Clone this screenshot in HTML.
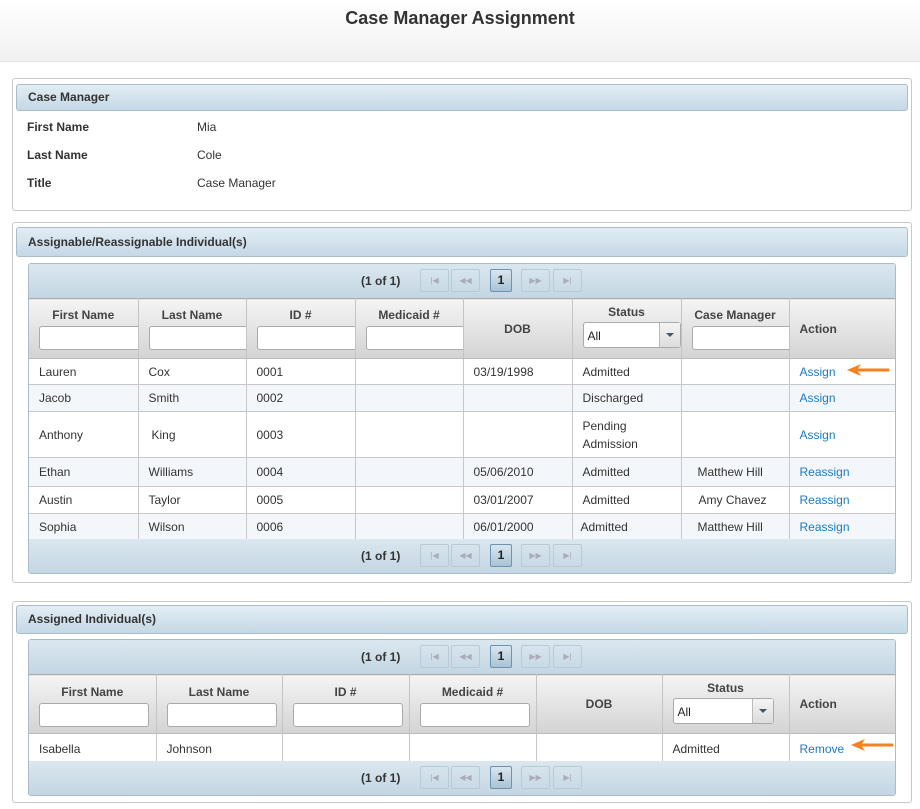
<!DOCTYPE html>
<html><head><style>
*{box-sizing:border-box;margin:0;padding:0}
body{width:920px;height:809px;background:#fff;font-family:"Liberation Sans",Arial,sans-serif;font-size:12px;color:#333;position:relative;overflow:hidden}
.top{position:absolute;left:0;top:0;width:920px;height:62px;background:linear-gradient(#fff,#f1f1f1);border-bottom:1px solid #e4e4e4}
.top h1{font-size:18px;text-align:center;padding-top:8px;color:#333}
.panel{position:absolute;left:12px;width:900px;border:1px solid #c8c8c8;border-radius:3px;background:#fff}
.ph{position:absolute;left:3px;right:3px;border:1px solid #a8bccb;border-radius:3px;background:linear-gradient(#e3edf4,#c4d8e6);font-weight:bold;padding-left:11px;color:#333}
.lbl{position:absolute;font-weight:bold}
.val{position:absolute}
.grid{position:absolute;left:15px;width:868px;border:1px solid #a8bccb;border-radius:3px;overflow:hidden}
.pg{height:34px;background:linear-gradient(#dbe7ef,#c3d6e3);position:relative}
.pg .t{position:absolute;left:332px;top:10px;font-weight:bold}
.pg .b{position:absolute;top:5px;width:29px;height:23px;border:1px solid #b9cad6;border-radius:2px;color:#aab;font-size:8px;text-align:center;line-height:21px}
.pg .p{border-color:#6e93ad;background:linear-gradient(#d9e6ee,#a9c3d5);color:#222;font-weight:bold;font-size:12px;width:22px}
table{border-collapse:collapse;table-layout:fixed;width:868px}
th{background:linear-gradient(#f4f4f4,#d3d3d3);border-right:1px solid #c4c4c4;border-top:1px solid #aaa;border-bottom:1px solid #bbb;font-weight:bold;color:#444;vertical-align:top;overflow:hidden;white-space:nowrap;position:relative}
th:last-child,td:last-child{border-right:none}
td{border-right:1px solid #c8c8c8;border-bottom:1px solid #c8c8c8;padding-left:10px;vertical-align:middle;white-space:nowrap}
tr.alt td{background:#f3f6fa}
th input{display:block;margin:4px 0 0 10px;width:110px;height:24px;border:1px solid #aaa;border-radius:3px;background:#fff}
.sel{position:relative;margin:3px 0 0 10px;width:98px;height:26px;border:1px solid #aaa;border-radius:3px;background:#fff;text-align:left;font-weight:normal;color:#222;padding:6px 4px}
.sel:after{content:"";position:absolute;right:0;top:0;width:20px;height:24px;border-left:1px solid #bbb;background:linear-gradient(#f4f4f4,#ddd)}
.sel i{position:absolute;right:6px;top:10px;border-left:4px solid transparent;border-right:4px solid transparent;border-top:4px solid #456;z-index:1}
a{color:#1a7bc4;text-decoration:none}
.arr{position:absolute;width:46px;height:14px}
</style></head><body>
<div class="top"><h1>Case Manager Assignment</h1></div>

<div class="panel" style="top:78px;height:133px">
<div class="ph" style="top:5px;height:27px;line-height:25px">Case Manager</div>
<div class="lbl" style="left:14px;top:41px">First Name</div><div class="val" style="left:184px;top:41px">Mia</div>
<div class="lbl" style="left:14px;top:69px">Last Name</div><div class="val" style="left:184px;top:69px">Cole</div>
<div class="lbl" style="left:14px;top:97px">Title</div><div class="val" style="left:184px;top:97px">Case Manager</div>
</div>

<div class="panel" style="top:222px;height:361px">
<div class="ph" style="top:4px;height:30px;line-height:28px">Assignable/Reassignable Individual(s)</div>
<div class="grid" style="top:40px;height:311px">
<div class="pg"><span class="t">(1 of 1)</span><span class="b" style="left:391px">|◀</span><span class="b" style="left:422px">◀◀</span><span class="b p" style="left:461px">1</span><span class="b" style="left:492px">▶▶</span><span class="b" style="left:524px">▶|</span></div>
<table>
<colgroup><col style="width:109px"><col style="width:108px"><col style="width:109px"><col style="width:108px"><col style="width:109px"><col style="width:109px"><col style="width:108px"><col style="width:108px"></colgroup>
<tr style="height:60px">
<th style="padding-top:9px">First Name<input></th><th style="padding-top:9px">Last Name<input></th><th style="padding-top:9px">ID #<input></th><th style="padding-top:9px">Medicaid #<input></th>
<th style="vertical-align:middle">DOB</th>
<th style="padding-top:6px">Status<div class="sel">All<i></i></div></th>
<th style="padding-top:9px">Case Manager<input></th>
<th style="vertical-align:middle;text-align:left;padding-left:10px">Action</th></tr>
<tr style="height:26px"><td>Lauren</td><td>Cox</td><td>0001</td><td></td><td>03/19/1998</td><td>Admitted</td><td></td><td><a>Assign</a></td></tr>
<tr class="alt" style="height:27px"><td>Jacob</td><td>Smith</td><td>0002</td><td></td><td></td><td>Discharged</td><td></td><td><a>Assign</a></td></tr>
<tr style="height:46px"><td>Anthony</td><td style="padding-left:13px">King</td><td>0003</td><td></td><td></td><td style="line-height:18px">Pending<br>Admission</td><td></td><td><a>Assign</a></td></tr>
<tr class="alt" style="height:29px"><td>Ethan</td><td>Williams</td><td>0004</td><td></td><td>05/06/2010</td><td>Admitted</td><td style="padding-left:16px">Matthew Hill</td><td><a>Reassign</a></td></tr>
<tr style="height:27px"><td>Austin</td><td>Taylor</td><td>0005</td><td></td><td>03/01/2007</td><td>Admitted</td><td style="padding-left:17px">Amy Chavez</td><td><a>Reassign</a></td></tr>
<tr class="alt" style="height:27px"><td>Sophia</td><td>Wilson</td><td>0006</td><td></td><td>06/01/2000</td><td style="padding-left:8px">Admitted</td><td style="padding-left:16px">Matthew Hill</td><td><a>Reassign</a></td></tr>
</table>
<div class="pg" style="position:absolute;left:0;bottom:0;width:868px"><span class="t">(1 of 1)</span><span class="b" style="left:391px">|◀</span><span class="b" style="left:422px">◀◀</span><span class="b p" style="left:461px">1</span><span class="b" style="left:492px">▶▶</span><span class="b" style="left:524px">▶|</span></div>
</div>
</div>

<div class="panel" style="top:601px;height:202px">
<div class="ph" style="top:3px;height:29px;line-height:27px">Assigned Individual(s)</div>
<div class="grid" style="top:37px;height:157px">
<div class="pg"><span class="t">(1 of 1)</span><span class="b" style="left:391px">|◀</span><span class="b" style="left:422px">◀◀</span><span class="b p" style="left:461px">1</span><span class="b" style="left:492px">▶▶</span><span class="b" style="left:524px">▶|</span></div>
<table>
<colgroup><col style="width:127px"><col style="width:126px"><col style="width:127px"><col style="width:127px"><col style="width:126px"><col style="width:127px"><col style="width:108px"></colgroup>
<tr style="height:59px">
<th style="padding-top:10px">First Name<input></th><th style="padding-top:10px">Last Name<input></th><th style="padding-top:10px">ID #<input></th><th style="padding-top:10px">Medicaid #<input></th>
<th style="vertical-align:middle">DOB</th>
<th style="padding-top:6px">Status<div class="sel" style="width:101px">All<i></i></div></th>
<th style="vertical-align:middle;text-align:left;padding-left:10px">Action</th></tr>
<tr style="height:30px"><td>Isabella</td><td>Johnson</td><td></td><td></td><td></td><td>Admitted</td><td><a>Remove</a></td></tr>
</table>
<div class="pg" style="position:absolute;left:0;bottom:0;width:868px"><span class="t">(1 of 1)</span><span class="b" style="left:391px">|◀</span><span class="b" style="left:422px">◀◀</span><span class="b p" style="left:461px">1</span><span class="b" style="left:492px">▶▶</span><span class="b" style="left:524px">▶|</span></div>
</div>
</div>

<svg class="arr" style="left:845px;top:363px" viewBox="0 0 46 14"><path d="M2 7 L16 1 L13 5.5 L44 5.5 Q45 7 44 8.5 L13 8.5 L16 13 Z" fill="#f5821f"/></svg>
<svg class="arr" style="left:849px;top:738px" viewBox="0 0 46 14"><path d="M2 7 L16 1 L13 5.5 L44 5.5 Q45 7 44 8.5 L13 8.5 L16 13 Z" fill="#f5821f"/></svg>
</body></html>
